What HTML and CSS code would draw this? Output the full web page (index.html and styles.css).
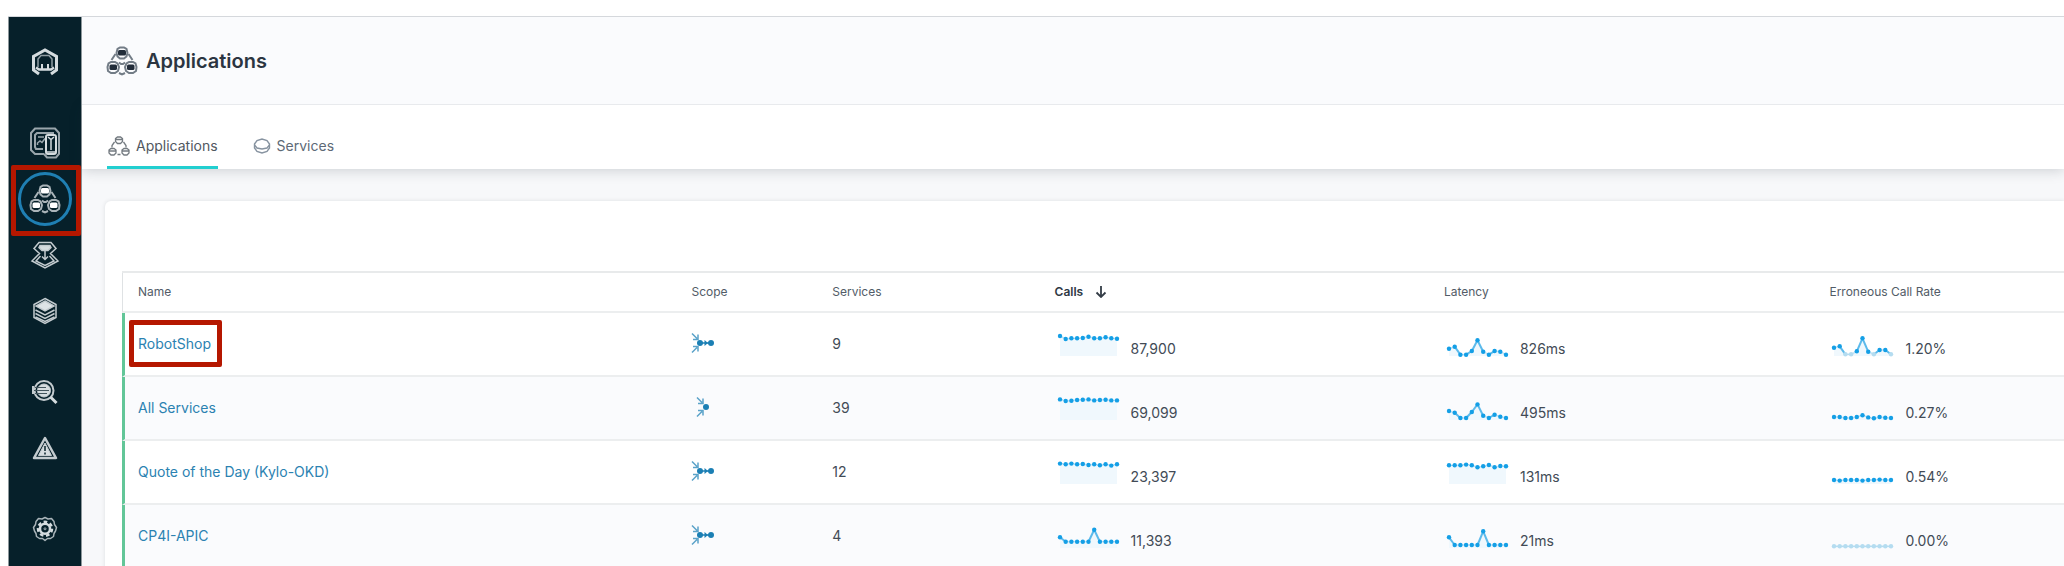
FILE: index.html
```html
<!DOCTYPE html>
<html lang="en">
<head>
<meta charset="utf-8">
<title>Applications</title>
<link rel="stylesheet" href="styles.css">
</head>
<body>
<svg class="defs" width="0" height="0" aria-hidden="true">
  <symbol id="i-apps" viewBox="0 0 32 30">
    <g class="halo">
      <path d="M10.500 7l1-4L14 1.500h4L20.500 3l1 4-1 3.500-2.500 2h-4l-2.500-2z"/>
      <path d="M1.500 21l1-3.500L5 16h4l2.500 1.500 1.500 3.500-1 4-3 2H5l-3-2z"/>
      <path d="M30.500 21l-1-3.500L27 16h-4l-2.500 1.500L19 21l1 4 3 2h4l3-2z"/>
      <path d="M9.500 8L5.500 14M22.500 8l4 6M13 16.500l2 1.500h2l2-1.500M13 27l3 1.500 3-1.500"/>
    </g>
    <g class="core">
      <rect x="12" y="4" width="8" height="5.500" rx="1.500"/>
      <rect x="3.500" y="18.500" width="7.500" height="5.500" rx="1.500"/>
      <rect x="21" y="18.500" width="7.500" height="5.500" rx="1.500"/>
    </g>
  </symbol>
  <symbol id="i-scope" viewBox="0 0 24 22">
    <g fill="none" stroke="#5ba3c9" stroke-width="1.500">
      <path d="M1 1.500l5 5M2 7.500h5v-5M1 20.500l5-5M2 14.500h5v5"/>
    </g>
    <path d="M8 11h12" stroke="#1b7fb4" stroke-width="1.500"/>
    <circle cx="9" cy="11" r="3" fill="#1b7fb4"/>
    <path d="M13.500 8l3.500 3-3.500 3z" fill="#1b7fb4"/>
    <circle cx="20" cy="11" r="3" fill="#1b7fb4"/>
  </symbol>
  <symbol id="i-scope-all" viewBox="0 0 24 22">
    <g fill="none" stroke="#5ba3c9" stroke-width="1.500">
      <path d="M6 1.500l5 5M7 7.500h5v-5M6 20.500l5-5M7 14.500h5v5"/>
    </g>
    <circle cx="15" cy="11" r="3" fill="#1b7fb4"/>
  </symbol>
</svg>
<div class="frame">
  <nav class="sidebar" aria-label="Main">
    <a class="nav-item" href="#" aria-label="Home">
      <svg width="28" height="28" viewBox="0 0 28 28" fill="none" stroke="#d5dcdf">
        <path d="M8 26l-5.500-4V8.500L14 2l11.500 6.500V22L20 26" stroke-width="3"/>
        <path d="M7 19V11l3-3.500h8l3 3.500v8" stroke="#8f9ca2" stroke-width="1.500"/>
        <path d="M5 19.500l3 2h12l3-2" stroke-width="2.500"/>
        <path d="M11 16v5M17 16v5" stroke-width="2"/>
      </svg>
    </a>
    <div class="nav-group">
      <a class="nav-item" href="#" aria-label="Websites and mobile apps">
        <svg width="32" height="32" viewBox="0 0 32 32" fill="none" stroke="#9aa6ac" stroke-width="2">
          <path d="M15 27H6l-4-4V6l4-4.500h20L30 6v21l-3 3.500H18L15 27"/>
          <path d="M14 22H7l-1-2V8l2-2h17" stroke-width="2"/>
          <path d="M8.500 18v-2l2.500-2 2 1.500 3-4M9 10h6" stroke-width="1.500"/>
          <rect x="17" y="8" width="10" height="19" rx="2" stroke-width="2" stroke="#d5dcdf"/>
          <path d="M19 10l3 2.500 3-2.500M22 12v11M18 25h8" stroke="#d5dcdf" stroke-width="1.500"/>
        </svg>
      </a>
      <a class="nav-item nav-item--active" href="#" aria-label="Applications" aria-current="page">
        <svg class="apps apps--light" width="32" height="30"><use href="#i-apps"/></svg>
      </a>
      <a class="nav-item" href="#" aria-label="Platforms">
        <svg width="30" height="28" viewBox="0 0 30 28" fill="none" stroke="#c3cbcf" stroke-width="1.500">
          <path d="M9 1.500h12l5 6-5.500 5L28 20l-13 7L2 20l7.500-7.500L4 7.500z"/>
          <path d="M10 4.500h10l1 2-3 3h-6l-3-3z" fill="#d5dcdf"/>
          <path d="M15 9v9M12 15.500l3 3 3-3"/>
          <path d="M10.500 15L6 20l9 4.500 9-4.500-4.500-5"/>
        </svg>
      </a>
      <a class="nav-item" href="#" aria-label="Infrastructure">
        <svg width="26" height="28" viewBox="0 0 26 28" fill="none" stroke="#c3cbcf" stroke-width="1.500">
          <path d="M13 1.500L24 7.500v13L13 26.500 2 20.500v-13z"/>
          <path d="M13 4l9 5-9 5-9-5z" fill="#dde3e6"/>
          <path d="M3.500 13l9.500 5 9.500-5M3.500 16.500l9.500 5 9.500-5M3.500 20l9.500 4.500 9.500-4.500"/>
        </svg>
      </a>
    </div>
    <div class="nav-group">
      <a class="nav-item" href="#" aria-label="Analytics">
        <svg width="26" height="26" viewBox="0 0 26 26" fill="none" stroke="#c3cbcf">
          <circle cx="12" cy="11.500" r="9.500" stroke-width="2"/>
          <circle cx="12" cy="11.500" r="6.500" fill="#d5dcdf"/>
          <path d="M3 8.500h11M2 11.500h15M3 14.500h12" stroke="#42545c" stroke-width="1.200"/>
          <path d="M1 7v8" stroke-width="2"/>
          <path d="M18.500 18l6 6" stroke="#d5dcdf" stroke-width="3"/>
        </svg>
      </a>
      <a class="nav-item" href="#" aria-label="Events">
        <svg width="26" height="24" viewBox="0 0 26 24" fill="none" stroke="#c3cbcf" stroke-linejoin="round">
          <path d="M13 2l11 20H2z" stroke-width="2.500"/>
          <path d="M13 7l6.500 12.500h-13z" fill="#d5dcdf"/>
          <path d="M13 10v5M13 16.500v2" stroke="#06202a" stroke-width="1.500"/>
        </svg>
      </a>
    </div>
    <a class="nav-item" href="#" aria-label="Settings">
      <svg width="26" height="26" viewBox="0 0 26 26" fill="none" stroke="#a9b4b9" stroke-linejoin="round">
        <path d="M10 3l3-1.500L16 3l3.500-.5L22 5.500l.5 3 2 3-1 3.500-1.500 2.500-.5 3-3 2-3 0L13 24.500 10.500 22.500l-3 0-3-2-.5-3L2.500 15l-1-3.500 2-3 .5-3 2.500-3z" stroke-width="1.500"/>
        <circle cx="13" cy="12.800" r="7" stroke="#d5dcdf" stroke-width="2.500" stroke-dasharray="3.600 2.683"/>
        <circle cx="13" cy="12.800" r="5" stroke="#d5dcdf" stroke-width="2.500"/>
        <circle cx="13" cy="12.800" r="1" stroke-width="1"/>
      </svg>
    </a>
  </nav>
  <main class="main">
    <header class="page-head">
      <svg class="apps apps--dark" width="32" height="30"><use href="#i-apps"/></svg>
      <h1 class="title">Applications</h1>
    </header>
    <div class="tabs">
      <a class="tab tab--active" href="#">
        <svg width="22" height="20" viewBox="0 0 22 20" fill="none" stroke="#747b81" stroke-width="1.300">
          <path d="M7.500 2.500L9.500 1h3l2 1.500v3l-2 2h-3l-2-2zM8 3.500h6"/>
          <path d="M1 14l2-1.500h3L8 14v3l-2 2H3l-2-2zM1.500 15h6M14 14l2-1.500h3l2 1.500v3l-2 2h-3l-2-2zM14.500 15h6"/>
          <path d="M6.500 6L4 9.500v2M15.500 6L18 9.500v2M9.500 18.500h3"/>
        </svg>
        Applications
      </a>
      <a class="tab" href="#">
        <svg width="18" height="16" viewBox="0 0 18 16" fill="none" stroke="#8793a0" stroke-width="1.400">
          <path d="M1.500 6L4 2.500 9 1l5 1.500L16.500 6v4L14 13.500 9 15l-5-1.500L1.500 10z"/>
          <path d="M1.500 7L4 10l5 1 5-1 2.500-3"/>
        </svg>
        Services
      </a>
    </div>
    <section class="panel">
      <table class="grid">
        <colgroup><col class="c-name"><col class="c-scope"><col class="c-services"><col class="c-calls"><col class="c-latency"><col class="c-rate"></colgroup>
        <thead>
          <tr>
            <th scope="col">Name</th><th scope="col">Scope</th><th scope="col">Services</th>
            <th scope="col" class="sorted" aria-sort="descending"><span class="sort">Calls
              <svg width="12" height="12" viewBox="0 0 12 12" fill="none" stroke="#333c46" stroke-width="1.800"><path d="M6 0v11M1.500 6.500L6 11l4.500-4.500"/></svg></span></th>
            <th scope="col">Latency</th><th scope="col">Erroneous Call Rate</th>
          </tr>
        </thead>
        <tbody>
          <tr>
            <td><a class="name name--marked" href="#">RobotShop</a></td>
            <td><svg class="scope" width="24" height="22"><use href="#i-scope"/></svg></td>
            <td>9</td>
            <td><div class="metric"><svg class="spark" data-y="4 7 6.3 6.3 6 4.7 6.3 6.3 5.3 6.3 6.7"></svg>87,900</div></td>
            <td><div class="metric"><svg class="spark" data-y="16.7 14.7 22.7 22.7 19 8.3 19.7 22.7 19 19.7 22.7"></svg>826ms</div></td>
            <td><div class="metric"><svg class="spark" data-y="15.7 14.3 22.3 22.3 19.3 6.3 19.7 22.3 18 18 22.3" data-empty="2 3 7 10"></svg>1.20%</div></td>
          </tr>
          <tr>
            <td><a class="name" href="#">All Services</a></td>
            <td><svg class="scope" width="24" height="22"><use href="#i-scope-all"/></svg></td>
            <td>39</td>
            <td><div class="metric"><svg class="spark" data-y="3.4 5 4.7 4 3.7 3.4 4.4 4 3.7 4.4 4.4"></svg>69,099</div></td>
            <td><div class="metric"><svg class="spark" data-y="15 16.7 22 22 16 8.4 19.7 22 18.7 20.7 22"></svg>495ms</div></td>
            <td><div class="metric"><svg class="spark" data-y="21 21 22 22 21 19.3 21.4 22.3 21 21.7 22"></svg>0.27%</div></td>
          </tr>
          <tr>
            <td><a class="name" href="#">Quote of the Day (Kylo-OKD)</a></td>
            <td><svg class="scope" width="24" height="22"><use href="#i-scope"/></svg></td>
            <td>12</td>
            <td><div class="metric"><svg class="spark" data-y="3.6 4.3 3.6 4.3 4 5 4.3 5.3 4.3 5.6 4.3"></svg>23,397</div></td>
            <td><div class="metric"><svg class="spark" data-y="5.3 5.3 5.3 4.6 5.3 7.3 6.3 5 7.3 6 6.3"></svg>131ms</div></td>
            <td><div class="metric"><svg class="spark" data-y="20 20.6 20 20 20 20.6 20 20 19.6 20 20"></svg>0.54%</div></td>
          </tr>
          <tr>
            <td><a class="name" href="#">CP4I-APIC</a></td>
            <td><svg class="scope" width="24" height="22"><use href="#i-scope"/></svg></td>
            <td>4</td>
            <td><div class="metric"><svg class="spark" data-y="13.3 17.7 17.7 17.7 17.7 17.7 5.7 17.7 17.7 17.7 17.7"></svg>11,393</div></td>
            <td><div class="metric"><svg class="spark" data-y="13.3 21 21 21 21 21 7.3 21 21 21 21"></svg>21ms</div></td>
            <td><div class="metric"><svg class="spark" data-y="22.3 22.3 22.3 22.3 22.3 22.3 22.3 22.3 22.3 22.3 22.3" data-empty="0 1 2 3 4 5 6 7 8 9 10"></svg>0.00%</div></td>
          </tr>
        </tbody>
      </table>
    </section>
  </main>
</div>
<script src="spark.js"></script>
</body>
</html>
```
FILE: styles.css
```css
* { box-sizing: border-box; }

body {
  margin: 0;
  height: 100vh;
  overflow: hidden;
  background: #fff;
  color: #424b56;
  font: 14px/20px Inter, "Liberation Sans", sans-serif;
}

a { color: inherit; text-decoration: none; }
svg { display: block; flex: none; }
.defs { position: absolute; }

.frame {
  display: flex;
  height: calc(100vh - 16px);
  margin: 16px 0 0 8px;
  border-top: 1px solid #d5d8dc;
}

.sidebar {
  display: flex;
  flex: none;
  flex-direction: column;
  gap: 25px;
  width: 74px;
  padding-top: 17px;
  background: #06202a;
  border: solid #8d979b;
  border-width: 0 1px;
}

.nav-item {
  position: relative;
  display: flex;
  flex: none;
  align-items: center;
  justify-content: center;
  height: 56px;
}

.nav-item--active::before {
  content: "";
  position: absolute;
  width: 48px;
  height: 48px;
  border: 3px solid #1f7fb3;
  border-radius: 50%;
}

.nav-item--active::after {
  content: "";
  position: absolute;
  inset: -6px 0 -9px 2px;
  border: 5px solid #b51700;
  border-radius: 2px;
}

.apps { stroke-width: 2; }
.apps--light { stroke: #aab4b9; fill: #fff; }
.apps--dark { stroke: #727c86; fill: #222d3a; }
.halo { fill: none; }
.core { stroke: none; }

.main {
  flex: 1;
  min-width: 0;
  background: #f7f8fa;
}

.page-head {
  position: relative;
  z-index: 1;
  display: flex;
  align-items: center;
  gap: 8px;
  height: 88px;
  padding-left: 24px;
  background: #fafbfd;
  border-bottom: 1px solid #e8eaed;
}

.title {
  margin: 0;
  color: #2b3541;
  font-size: 20px;
  font-weight: 600;
  line-height: 28px;
}

.tabs {
  display: flex;
  gap: 34px;
  height: 64px;
  padding-left: 25px;
  background: #fff;
  box-shadow: 0 2px 12px rgba(30, 40, 50, 0.18);
}

.tab {
  display: flex;
  align-items: center;
  gap: 6px;
  padding: 20px 0 0 1px;
  color: #5d6976;
  border-bottom: 3px solid transparent;
}

.tab--active { color: #51585f; border-color: #22cfd0; }

.panel {
  margin: 32px 0 0 23px;
  padding: 70px 0 0 17px;
  background: #fff;
  border-radius: 6px 0 0;
  box-shadow: 0 0 4px rgba(30, 40, 50, 0.12);
}

.grid {
  width: 100%;
  table-layout: fixed;
  border-spacing: 0;
  border-top: 2px solid #e8eaeb;
}

.c-name { width: 28.500%; }
.c-scope { width: 7.250%; }
.c-services { width: 11.450%; }
.c-calls { width: 20.050%; }
.c-latency { width: 19.850%; }

th, td {
  padding: 0 0 0 16px;
  text-align: left;
  border-bottom: 2px solid #eceeef;
}

th {
  height: 40px;
  color: #525c67;
  font-size: 12px;
  font-weight: 400;
}

th:first-child { border-left: 1px solid #dfe2e4; padding-left: 15px; }
td { height: 64px; }
td:first-child { border-left: 3px solid #62c698; padding-left: 13px; }
tbody tr:nth-child(even) { background: #fafbfd; }

.sorted { color: #2f3945; font-weight: 600; }
.sort { display: flex; align-items: center; gap: 12px; }
.scope { margin-bottom: 3px; }

.name { position: relative; color: #2b82b1; }

.name--marked::after {
  content: "";
  position: absolute;
  inset: -15px -11px -15px -9px;
  border: 5px solid #b51700;
  border-radius: 2px;
}

.metric { display: flex; align-items: center; gap: 10px; padding-top: 9px; }

.spark {
  width: 66px;
  height: 26px;
  margin-bottom: 7px;
  fill: none;
}

.spark .area { fill: #f0f8fd; }
.spark .line { stroke: #b9e1f7; stroke-width: 1.500; }
.spark .steep { stroke: #5cbaeb; stroke-width: 2; }
.spark .dot { fill: #149fe6; }
.spark .empty { fill: #b4dcf0; }
.spark .fade { stroke: #b4dcf0; stroke-width: 1.500; }
```
FILE: spark.js
```js
const STEP = 5.7;
const LEFT = 5;
const BASE = 24;

function shape(parent, tag, attrs) {
  const el = document.createElementNS("http://www.w3.org/2000/svg", tag);
  for (const key in attrs) el.setAttribute(key, attrs[key]);
  parent.appendChild(el);
}

document.querySelectorAll(".spark").forEach((svg) => {
  const empty = (svg.dataset.empty || "").split(" ").filter(Boolean).map(Number);
  const pts = svg.dataset.y.split(" ").map((y, i) => [LEFT + i * STEP, Number(y)]);
  const end = pts[pts.length - 1][0];
  shape(svg, "polygon", { class: "area", points: pts.join(" ") + ` ${end},${BASE} ${LEFT},${BASE}` });
  pts.slice(1).forEach(([x, y], i) => {
    const faded = empty.includes(i) && empty.includes(i + 1);
    const steep = Math.abs(y - pts[i][1]) > 3;
    shape(svg, "line", { class: faded ? "fade" : steep ? "steep" : "line", x1: pts[i][0], y1: pts[i][1], x2: x, y2: y });
  });
  pts.forEach(([x, y], i) => {
    shape(svg, "circle", { class: empty.includes(i) ? "empty" : "dot", cx: x, cy: y, r: 2.2 });
  });
});
```
